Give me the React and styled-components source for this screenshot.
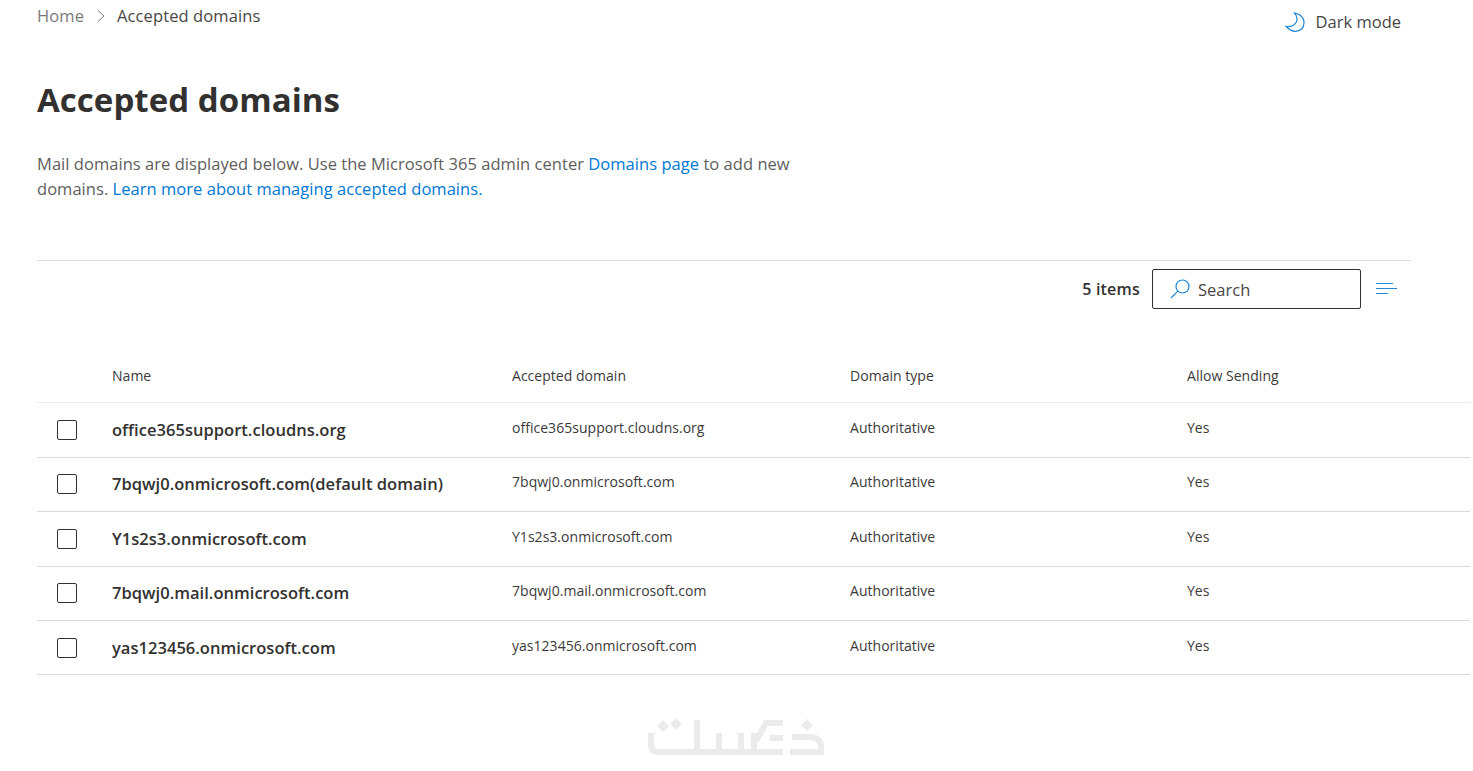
import styled, { createGlobalStyle } from 'styled-components'

const GlobalStyle = createGlobalStyle`
html, body {
  margin: 0;
  padding: 0;
  background: #fff;
  font-family: "Open Sans", "Noto Sans", "Liberation Sans", sans-serif;
  color: #323130;
  overflow: hidden;
}
`

const Page = styled.div`
  width: 1473px;
  height: 771px;
  padding-left: 37px;
  box-sizing: border-box;
  overflow: hidden;
`

const TopBar = styled.div`
  display: flex;
  justify-content: space-between;
  align-items: flex-start;
  width: 1364px;
  height: 50px;
`

const Breadcrumb = styled.nav`
  display: flex;
  align-items: center;
  height: 31px;
  font-size: 16.5px;
  letter-spacing: 0.1px;
`

const Crumb = styled.span`
  color: ${p => (p.$muted ? '#7a7a7a' : '#484644')};
`

const CrumbSep = styled.svg`
  width: 12px;
  height: 14px;
  margin: 0 10px 0 11px;
`

const DarkMode = styled.button`
  display: flex;
  align-items: center;
  gap: 11px;
  margin-top: 10px;
  padding: 0;
  border: 0;
  background: none;
  font: inherit;
  font-size: 16.5px;
  color: #484644;
`

const Title = styled.h1`
  margin: 24px 0 0;
  font-size: 33px;
  line-height: 52px;
  font-weight: 700;
  letter-spacing: 0.05px;
  color: #323130;
`

const Description = styled.p`
  margin: 25px 0 0;
  width: 770px;
  font-size: 16.5px;
  line-height: 25px;
  letter-spacing: 0.04px;
  color: #605e5c;
`

const Link = styled.a`
  color: #0078d4;
  text-decoration: none;
`

const Toolbar = styled.div`
  display: flex;
  align-items: center;
  justify-content: flex-end;
  width: 1374px;
  height: 58px;
  margin-top: 59px;
  padding: 0 14px 2px 0;
  box-sizing: border-box;
  border-top: 1px solid #e1dfdd;
`

const ItemCount = styled.span`
  font-size: 16px;
  font-weight: 600;
  letter-spacing: 0.2px;
  margin-right: 12px;
`

const SearchBox = styled.div`
  display: flex;
  align-items: center;
  gap: 8px;
  width: 209px;
  height: 40px;
  padding: 1px 0 0 17px;
  box-sizing: border-box;
  border: 1px solid #323130;
  border-radius: 2px;
  font-size: 16.5px;
  color: #484644;
`

const FilterIcon = styled.svg`
  width: 21px;
  height: 14px;
  margin-left: 15px;
`

const Table = styled.div`
  margin-top: 33px;
  width: 1433px;
`

const Row = styled.div`
  display: grid;
  grid-template-columns: 75px 400px 338px 337px 1fr;
  align-items: center;
  height: ${p => (p.$head ? '52.4px' : '54.4px')};
  box-sizing: border-box;
  border-bottom: 1px solid ${p => (p.$head ? '#edebe9' : '#dddbd9')};
  font-size: 14px;
  letter-spacing: 0.03px;
  color: #3b3a39;
`

const HeadCell = styled.div`
  margin-top: -3px;
`

const CheckCell = styled.div`
  padding-left: 20px;
`

const Checkbox = styled.span`
  display: block;
  width: 18px;
  height: 18px;
  border: 1px solid #323130;
  border-radius: 2px;
`

const NameCell = styled.div`
  font-size: 16.5px;
  font-weight: 600;
  color: #323130;
  margin-top: -1px;
`

const Cell = styled.div`
  margin-top: -5px;
`

const Watermark = styled.svg`
  display: block;
  width: 182px;
  height: 44px;
  margin: 39.6px 0 0 609px;
`

const domains = [
  { name: 'office365support.cloudns.org', domain: 'office365support.cloudns.org' },
  { name: '7bqwj0.onmicrosoft.com(default domain)', domain: '7bqwj0.onmicrosoft.com' },
  { name: 'Y1s2s3.onmicrosoft.com', domain: 'Y1s2s3.onmicrosoft.com' },
  { name: '7bqwj0.mail.onmicrosoft.com', domain: '7bqwj0.mail.onmicrosoft.com' },
  { name: 'yas123456.onmicrosoft.com', domain: 'yas123456.onmicrosoft.com' },
]

export default function App() {
  return (
    <Page>
      <GlobalStyle />
      <TopBar>
        <Breadcrumb>
          <Crumb $muted>Home</Crumb>
          <CrumbSep viewBox="0 0 12 14" fill="none" stroke="#7a7a7a" strokeWidth="1">
            <path d="M3 1.5 L9 7 L3 12.5" />
          </CrumbSep>
          <Crumb>Accepted domains</Crumb>
        </Breadcrumb>
        <DarkMode>
          <svg width="20" height="20" viewBox="0 0 20 20" fill="none" stroke="#1f86d8" strokeWidth="1.2">
            <path d="M9.5 1 C12 1.2 19 3.5 19 11 C19 16 15 19.3 10.5 19.3 C7 19.3 3.8 17.5 1.3 14.5 C6 15.5 12 12.5 12 7 C12 4.5 11 2.5 9.5 1 Z" />
          </svg>
          Dark mode
        </DarkMode>
      </TopBar>

      <Title>Accepted domains</Title>
      <Description>
        Mail domains are displayed below. Use the Microsoft 365 admin center <Link>Domains page</Link> to add new
        domains. <Link>Learn more about managing accepted domains.</Link>
      </Description>

      <Toolbar>
        <ItemCount>5 items</ItemCount>
        <SearchBox>
          <svg width="20" height="20" viewBox="0 0 20 20" fill="none" stroke="#1f86d8" strokeWidth="1.2">
            <circle cx="12.5" cy="7.5" r="6.5" />
            <path d="M7.8 12.2 L1 19" />
          </svg>
          Search
        </SearchBox>
        <FilterIcon viewBox="0 0 21 14" stroke="#1f86d8" strokeWidth="1.2">
          <path d="M0 1.5 H17 M0 6.5 H21 M0 11.5 H12" />
        </FilterIcon>
      </Toolbar>

      <Table>
        <Row $head>
          <span />
          <HeadCell>Name</HeadCell>
          <HeadCell>Accepted domain</HeadCell>
          <HeadCell>Domain type</HeadCell>
          <HeadCell>Allow Sending</HeadCell>
        </Row>
        {domains.map(d => (
          <Row key={d.name}>
            <CheckCell><Checkbox /></CheckCell>
            <NameCell>{d.name}</NameCell>
            <Cell>{d.domain}</Cell>
            <Cell>Authoritative</Cell>
            <Cell>Yes</Cell>
          </Row>
        ))}
      </Table>

      {/* site logo watermark, coordinates are page pixels */}
      <Watermark viewBox="646 715 182 44" fill="none" stroke="#ebebeb" strokeWidth="6">
        <path d="M651 733 V745 Q651 752 658 752 H783" />
        <path d="M697 720 V752 M719 733 V752 M741 733 V752 M754 733 V752" />
        <path d="M783 723 H766 L756 741 M783 738 H770" />
        <path d="M790 752 H821 V747 Q821 737 809 737 H792" />
        <path d="M663 720 L669 726 L663 732 L657 726 Z M676 718 L682 724 L676 730 L670 724 Z M807 719 L813 725 L807 731 L801 725 Z" fill="#ebebeb" stroke="none" />
      </Watermark>
    </Page>
  )
}
